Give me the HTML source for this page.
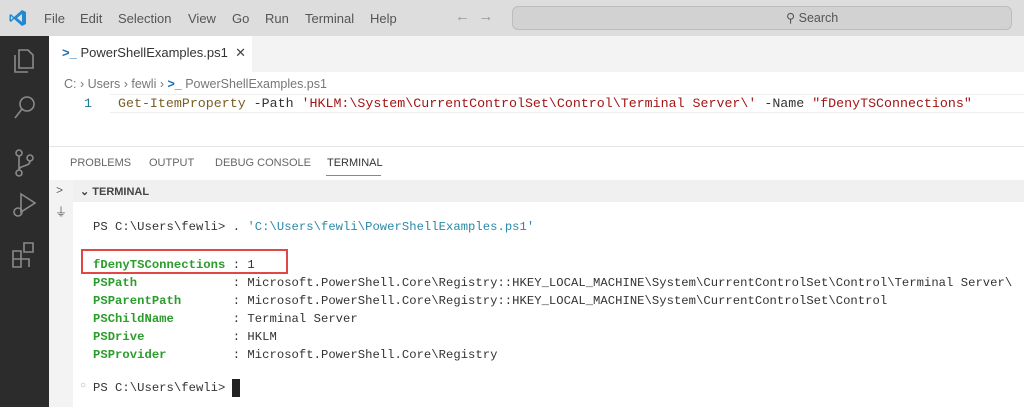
<!DOCTYPE html>
<html><head><style>
*{margin:0;padding:0;box-sizing:border-box}
body{width:1024px;height:407px;overflow:hidden;background:#fff;font-family:"Liberation Sans",sans-serif;position:relative}
.a{position:absolute;white-space:pre}
.mono{font-family:"Liberation Mono",monospace}
.menu{font-size:13px;color:#555;top:11px}
.term{font-size:12.2px;letter-spacing:0.04px;color:#333}
.g{color:#2a9d2a;font-weight:bold}
</style></head><body>
<div class="a" style="left:0;top:0;width:1024px;height:36px;background:#dddddd"></div>
<svg class="a" style="left:9px;top:9px" width="18" height="18" viewBox="0 0 18 18"><path d="M13 1 L17 3 V15 L13 17 L5 10 L2 13 L0.5 12 V6 L2 5 L5 8 Z M13 5 L8 9 L13 13 Z M2 7 V11 L4 9 Z" fill="#1f8ad2"/></svg>
<div class="a menu" style="left:44px">File</div>
<div class="a menu" style="left:80px">Edit</div>
<div class="a menu" style="left:118px">Selection</div>
<div class="a menu" style="left:188px">View</div>
<div class="a menu" style="left:232px">Go</div>
<div class="a menu" style="left:265px">Run</div>
<div class="a menu" style="left:305px">Terminal</div>
<div class="a menu" style="left:370px">Help</div>
<div class="a menu" style="left:455px;color:#999;font-size:15px;top:8px">←  →</div>
<div class="a" style="left:512px;top:6px;width:500px;height:24px;background:#d2d2d2;border:1px solid #bdbdbd;border-radius:6px"></div>
<div class="a" style="left:786px;top:10px;font-size:12.5px;color:#555">⚲ Search</div>
<div class="a" style="left:0;top:36px;width:49px;height:371px;background:#2c2c2c"></div>
<svg class="a" style="left:10px;top:46px" width="30" height="230" viewBox="0 0 30 230" fill="none" stroke="#8a8a8a" stroke-width="1.6">
<path d="M9 4h9l5 5v13H9z M5 9v17h13"/>
<circle cx="17" cy="58" r="7"/><path d="M12 63 L5 72"/>
<circle cx="9" cy="107" r="3"/><circle cx="20" cy="112" r="3"/><circle cx="9" cy="127" r="3"/><path d="M9 110v14 M20 115c0 6-11 4-11 9"/>
<path d="M11 148 L25 157 L11 166 Z"/><circle cx="8" cy="166" r="4"/>
<path d="M3 221 v-16 h8 v16 z M3 213 h16 v8 M14 197 h9 v9 h-9z"/>
</svg>
<div class="a" style="left:49px;top:36px;width:975px;height:36px;background:#f3f3f3"></div>
<div class="a" style="left:49px;top:36px;width:203px;height:36px;background:#fff"></div>
<div class="a" style="left:62px;top:45px;font-size:13px;color:#333"><span style="color:#1f6fb2;font-weight:bold">&gt;_</span> PowerShellExamples.ps1  <span style="color:#444">✕</span></div>
<div class="a" style="left:64px;top:77px;font-size:12.5px;color:#777">C: › Users › fewli › <span style="color:#1f6fb2;font-weight:bold">&gt;_</span> PowerShellExamples.ps1</div>
<div class="a" style="left:110px;top:94px;width:914px;height:19px;border-top:1px solid #eee;border-bottom:1px solid #eee"></div>
<div class="a mono" style="left:84px;top:96px;font-size:13.3px;color:#237893">1</div>
<div class="a mono" style="left:118px;top:96px;font-size:13.3px;color:#333"><span style="color:#795e26">Get-ItemProperty</span> -Path <span style="color:#a31515">'HKLM:\System\CurrentControlSet\Control\Terminal Server\'</span> -Name <span style="color:#a31515">"fDenyTSConnections"</span></div>
<div class="a" style="left:49px;top:146px;width:975px;height:1px;background:#e5e5e5"></div>
<div class="a" style="left:70px;top:157px;font-size:11px;color:#666">PROBLEMS</div>
<div class="a" style="left:149px;top:157px;font-size:11px;color:#666">OUTPUT</div>
<div class="a" style="left:215px;top:157px;font-size:11px;color:#666">DEBUG CONSOLE</div>
<div class="a" style="left:327px;top:157px;font-size:11px;color:#333">TERMINAL</div>
<div class="a" style="left:326px;top:175px;width:55px;height:1px;background:#888"></div>
<div class="a" style="left:49px;top:180px;width:24px;height:227px;background:#f3f3f3"></div>
<div class="a" style="left:73px;top:180px;width:951px;height:22px;background:#f0f0f0"></div>
<div class="a" style="left:56px;top:183px;font-size:12px;color:#666">&gt;</div>
<div class="a" style="left:55px;top:203px;font-size:12px;color:#666">⏚</div>
<div class="a" style="left:80px;top:185px;font-size:11px;color:#444;font-weight:bold">⌄ TERMINAL</div>
<div class="a mono term" style="left:93px;top:220px">PS C:\Users\fewli&gt; . <span style="color:#2a8aa8">'C:\Users\fewli\PowerShellExamples.ps1'</span></div>
<div class="a mono term" style="left:93px;top:256px;line-height:18px"><span class="g">fDenyTSConnections</span> : 1
<span class="g">PSPath</span>             : Microsoft.PowerShell.Core\Registry::HKEY_LOCAL_MACHINE\System\CurrentControlSet\Control\Terminal Server\
<span class="g">PSParentPath</span>       : Microsoft.PowerShell.Core\Registry::HKEY_LOCAL_MACHINE\System\CurrentControlSet\Control
<span class="g">PSChildName</span>        : Terminal Server
<span class="g">PSDrive</span>            : HKLM
<span class="g">PSProvider</span>         : Microsoft.PowerShell.Core\Registry</div>
<div class="a" style="left:81px;top:249px;width:207px;height:25px;border:2px solid #e04848"></div>
<div class="a" style="left:80px;top:380px;font-size:10px;color:#aaa">○</div>
<div class="a mono term" style="left:93px;top:381px">PS C:\Users\fewli&gt; </div>
<div class="a" style="left:232px;top:379px;width:8px;height:18px;background:#222"></div>
</body></html>
